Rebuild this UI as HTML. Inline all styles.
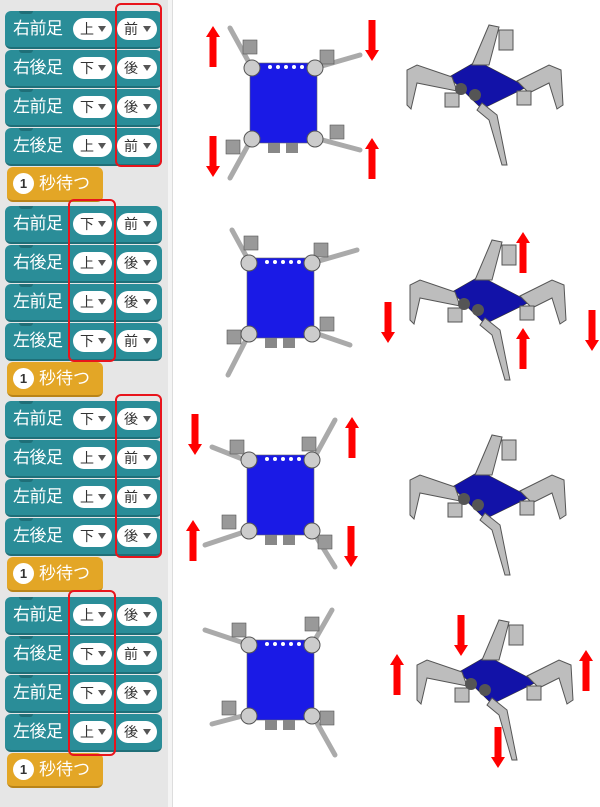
<!DOCTYPE html>
<html><head><meta charset="utf-8">
<style>
*{margin:0;padding:0;box-sizing:border-box}
body{width:600px;height:807px;background:#fff;position:relative;overflow:hidden;font-family:"Liberation Sans","Noto Sans CJK JP",sans-serif}
.panel{position:absolute;left:0;top:0;width:168px;height:807px;background:#e6e6e6}
.edge{position:absolute;left:168px;top:0;width:5px;height:807px;background:#f4f4f4;border-right:1px solid #ddd}
.b{position:absolute;left:5px;width:157px;height:38px;background:#2a8d98;border-radius:6px;border-bottom:2px solid #1f6f78}
.b:before{content:"";position:absolute;left:14px;top:0;width:14px;height:3px;background:#1f6f78;border-radius:0 0 3px 3px}
.b .t{position:absolute;left:8px;top:0;line-height:35px;color:#fff;font-size:17px;letter-spacing:-0.5px}
.p{position:absolute;top:7px;height:22px;background:#fff;border-radius:11px;font-size:14px;color:#333;padding-left:7px;line-height:22px}
.p1{left:68px;width:39px}.p2{left:112px;width:40px}
.p:after{content:"";position:absolute;right:6px;top:8px;border-left:4px solid transparent;border-right:4px solid transparent;border-top:6px solid #555}
.w{position:absolute;left:7px;width:96px;height:35px;background:#e3a626;border-radius:6px;border-bottom:2px solid #b98418}
.w .c{position:absolute;left:6px;top:6px;width:21px;height:21px;border-radius:11px;background:#fff;color:#333;font-size:13px;text-align:center;line-height:21px;font-weight:bold}
.w .t{position:absolute;left:32px;top:0;line-height:33px;color:#fff;font-size:17px}
.r{position:absolute;border:2px solid #e8141c;border-radius:6px}
svg{position:absolute;left:0;top:0}
</style></head><body>
<div class="panel"></div><div class="edge"></div>

<div class="b" style="top:11px"><span class="t">右前足</span><span class="p p1">上</span><span class="p p2">前</span></div>
<div class="b" style="top:50px"><span class="t">右後足</span><span class="p p1">下</span><span class="p p2">後</span></div>
<div class="b" style="top:89px"><span class="t">左前足</span><span class="p p1">下</span><span class="p p2">後</span></div>
<div class="b" style="top:128px"><span class="t">左後足</span><span class="p p1">上</span><span class="p p2">前</span></div>
<div class="w" style="top:167px"><span class="c">1</span><span class="t">秒待つ</span></div>

<div class="b" style="top:206px"><span class="t">右前足</span><span class="p p1">下</span><span class="p p2">前</span></div>
<div class="b" style="top:245px"><span class="t">右後足</span><span class="p p1">上</span><span class="p p2">後</span></div>
<div class="b" style="top:284px"><span class="t">左前足</span><span class="p p1">上</span><span class="p p2">後</span></div>
<div class="b" style="top:323px"><span class="t">左後足</span><span class="p p1">下</span><span class="p p2">前</span></div>
<div class="w" style="top:362px"><span class="c">1</span><span class="t">秒待つ</span></div>

<div class="b" style="top:401px"><span class="t">右前足</span><span class="p p1">下</span><span class="p p2">後</span></div>
<div class="b" style="top:440px"><span class="t">右後足</span><span class="p p1">上</span><span class="p p2">前</span></div>
<div class="b" style="top:479px"><span class="t">左前足</span><span class="p p1">上</span><span class="p p2">前</span></div>
<div class="b" style="top:518px"><span class="t">左後足</span><span class="p p1">下</span><span class="p p2">後</span></div>
<div class="w" style="top:557px"><span class="c">1</span><span class="t">秒待つ</span></div>

<div class="b" style="top:597px"><span class="t">右前足</span><span class="p p1">上</span><span class="p p2">後</span></div>
<div class="b" style="top:636px"><span class="t">右後足</span><span class="p p1">下</span><span class="p p2">前</span></div>
<div class="b" style="top:675px"><span class="t">左前足</span><span class="p p1">下</span><span class="p p2">後</span></div>
<div class="b" style="top:714px"><span class="t">左後足</span><span class="p p1">上</span><span class="p p2">後</span></div>
<div class="w" style="top:753px"><span class="c">1</span><span class="t">秒待つ</span></div>

<div class="r" style="left:115px;top:3px;width:47px;height:164px"></div>
<div class="r" style="left:68px;top:199px;width:48px;height:163px"></div>
<div class="r" style="left:115px;top:394px;width:47px;height:164px"></div>
<div class="r" style="left:68px;top:590px;width:48px;height:166px"></div>

<svg width="600" height="807" viewBox="0 0 600 807">
<defs>
<g id="au"><rect x="-3.5" y="10" width="7" height="31" fill="#f00"/><polygon points="-7,11 7,11 0,0" fill="#f00"/></g>
<g id="ad"><rect x="-3.5" y="0" width="7" height="31" fill="#f00"/><polygon points="-7,30 7,30 0,41" fill="#f00"/></g>
<g id="top">
<rect x="0" y="0" width="67" height="80" fill="#1a1ae6" stroke="#666" stroke-width="0.6"/>
<g fill="#fff"><circle cx="20" cy="4" r="2"/><circle cx="28" cy="4" r="2"/><circle cx="36" cy="4" r="2"/><circle cx="44" cy="4" r="2"/><circle cx="52" cy="4" r="2"/></g>
<rect x="18" y="80" width="12" height="10" fill="#888"/><rect x="36" y="80" width="12" height="10" fill="#888"/>
<g fill="#ccc" stroke="#555" stroke-width="1"><circle cx="2" cy="5" r="8"/><circle cx="65" cy="5" r="8"/><circle cx="2" cy="76" r="8"/><circle cx="65" cy="76" r="8"/></g>
</g>
<g id="r3d">
<polygon points="-38,-8 -10,-24 40,2 -5,24" fill="#1212a8" stroke="#333" stroke-width="0.6"/>
<g fill="#bdbdbd" stroke="#555" stroke-width="1">
<path d="M-35,-8 L-70,-20 L-80,-15 L-80,20 L-76,24 L-70,-2 L-50,2 L-30,6 Z"/>
<path d="M30,-4 L62,-20 L74,-15 L76,20 L70,24 L62,-2 L42,8 Z"/>
<path d="M-15,-20 L2,-60 L12,-58 L2,-20 Z"/>
<rect x="12" y="-55" width="14" height="20"/>
<path d="M-5,18 L10,30 L20,80 L15,80 L2,35 L-10,25 Z"/>
<rect x="-42" y="8" width="14" height="14"/><rect x="30" y="6" width="14" height="14"/>
</g>
<g fill="#555"><circle cx="-26" cy="4" r="6"/><circle cx="-12" cy="10" r="6"/></g>
</g>
</defs>

<g stroke="#aaa" stroke-width="5" stroke-linecap="round">
<line x1="252" y1="68" x2="230" y2="28"/><line x1="315" y1="68" x2="360" y2="55"/><line x1="252" y1="138" x2="230" y2="178"/><line x1="315" y1="138" x2="360" y2="150"/>
<line x1="250" y1="263" x2="232" y2="230"/><line x1="312" y1="263" x2="357" y2="250"/><line x1="250" y1="332" x2="228" y2="375"/><line x1="312" y1="332" x2="350" y2="345"/>
<line x1="250" y1="462" x2="212" y2="447"/><line x1="312" y1="462" x2="335" y2="420"/><line x1="250" y1="530" x2="205" y2="545"/><line x1="312" y1="530" x2="335" y2="567"/>
<line x1="250" y1="645" x2="205" y2="630"/><line x1="312" y1="645" x2="332" y2="610"/><line x1="250" y1="714" x2="212" y2="724"/><line x1="312" y1="714" x2="335" y2="755"/>
</g>
<g fill="#999" stroke="#555" stroke-width="0.6">
<rect x="243" y="40" width="14" height="14"/><rect x="320" y="50" width="14" height="14"/><rect x="226" y="140" width="14" height="14"/><rect x="330" y="125" width="14" height="14"/>
<rect x="244" y="236" width="14" height="14"/><rect x="314" y="243" width="14" height="14"/><rect x="227" y="330" width="14" height="14"/><rect x="320" y="317" width="14" height="14"/>
<rect x="230" y="440" width="14" height="14"/><rect x="302" y="437" width="14" height="14"/><rect x="222" y="515" width="14" height="14"/><rect x="318" y="535" width="14" height="14"/>
<rect x="232" y="623" width="14" height="14"/><rect x="305" y="617" width="14" height="14"/><rect x="222" y="701" width="14" height="14"/><rect x="320" y="711" width="14" height="14"/>
</g>
<use href="#top" x="250" y="63"/>
<use href="#top" x="247" y="258"/>
<use href="#top" x="247" y="455"/>
<use href="#top" x="247" y="640"/>

<use href="#r3d" x="487" y="85"/>
<use href="#r3d" x="490" y="300"/>
<use href="#r3d" x="490" y="495"/>
<use href="#r3d" x="497" y="680"/>

<use href="#au" x="213" y="26"/><use href="#ad" x="372" y="20"/><use href="#ad" x="213" y="136"/><use href="#au" x="372" y="138"/>
<use href="#au" x="523" y="232"/><use href="#ad" x="388" y="302"/><use href="#ad" x="592" y="310"/><use href="#au" x="523" y="328"/>
<use href="#ad" x="195" y="414"/><use href="#au" x="352" y="417"/><use href="#au" x="193" y="520"/><use href="#ad" x="351" y="526"/>
<use href="#ad" x="461" y="615"/><use href="#au" x="397" y="654"/><use href="#au" x="586" y="650"/><use href="#ad" x="498" y="727"/>
</svg>
</body></html>
